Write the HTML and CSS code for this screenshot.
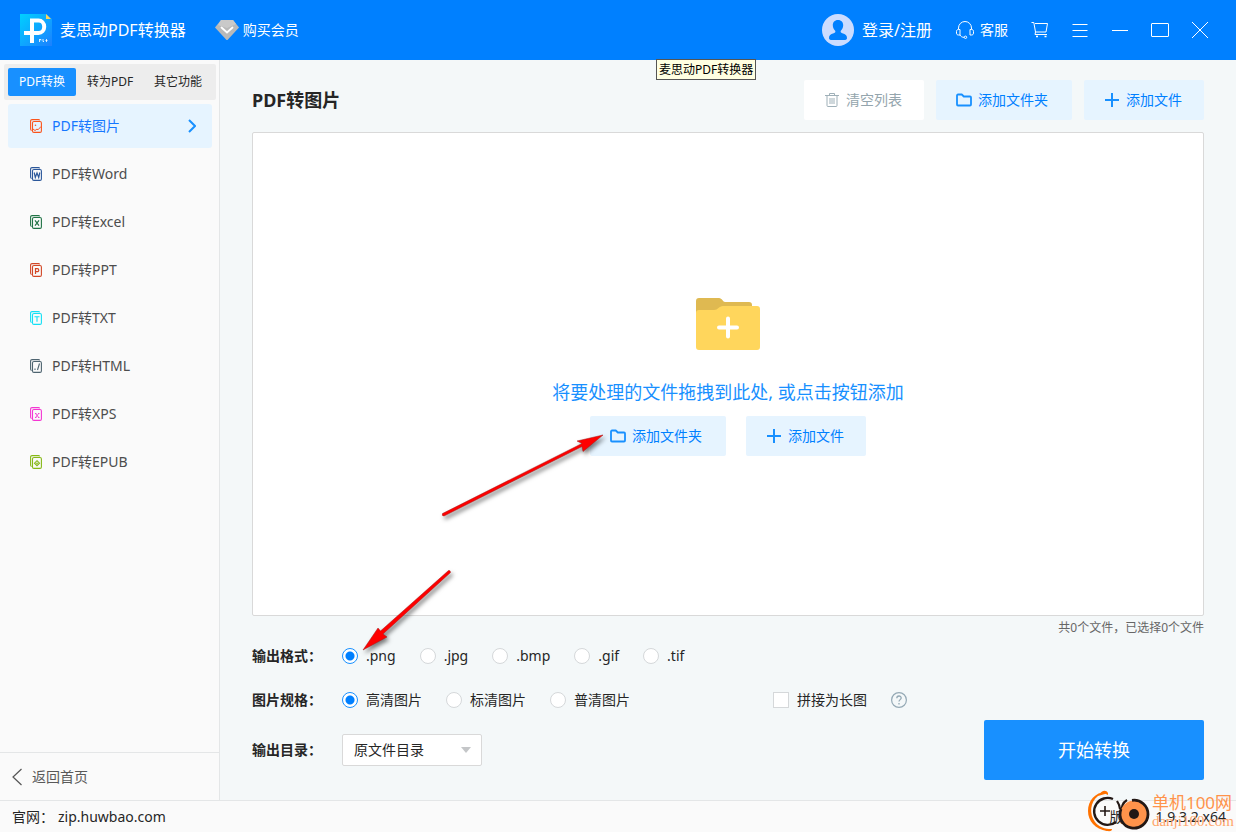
FILE: index.html
```html
<!DOCTYPE html>
<html lang="zh-CN">
<head>
<meta charset="utf-8">
<title>麦思动PDF转换器</title>
<link rel="stylesheet" href="styles.css">
</head>
<body>
<svg class="defs" aria-hidden="true">
  <symbol id="i-folder" viewBox="0 0 16 16"><path d="M1 3.500a1 1 0 0 1 1-1h3.800l2 2H14a1 1 0 0 1 1 1V12.500a1 1 0 0 1-1 1H2a1 1 0 0 1-1-1z" fill="none" stroke="#1890ff" stroke-width="1.800" stroke-linejoin="round"/></symbol>
  <symbol id="i-plus" viewBox="0 0 16 16"><path d="M8 1v14M1 8h14" fill="none" stroke="#1890ff" stroke-width="2"/></symbol>
  <symbol id="i-doc" viewBox="0 0 12 14"><path d="M3.600 2.500h6.400a1.400 1.400 0 0 1 1.400 1.400v8.100a1.400 1.400 0 0 1-1.400 1.400H3.900a1.400 1.400 0 0 1-1.400-1.400V3.900a1.400 1.400 0 0 1 1.400-1.400zM1.600 11.500C.9 11.300.6 10.800.6 10V2A1.400 1.400 0 0 1 2 .6h6.500c.6 0 1 .3 1.200.8" fill="none" stroke="currentColor" stroke-width="1.100"/></symbol>
</svg>

<header class="titlebar">
  <svg class="logo" viewBox="0 0 32 32" width="32" height="32">
    <defs><linearGradient id="lg" x1="0" y1="0" x2="1" y2="1"><stop offset="0" stop-color="#00d0ff"/><stop offset="1" stop-color="#1c80ff"/></linearGradient></defs>
    <path d="M0 0h26l6 5v27H0z" fill="url(#lg)"/><path d="M26 0l5 5h-5z" fill="#ffd35c"/>
    <path d="M12 29V6.500h6.500a5.500 6 0 0 1 0 12.500H4" fill="none" stroke="#fff" stroke-width="4"/>
    <path d="M19.500 25v3M19.500 25.500h1.500v1M23 25v2.500h1M25.500 26.500h2M26.500 25v3" stroke="#fff" stroke-width=".8" fill="none"/>
  </svg>
  <h1 class="app-name">麦思动PDF转换器</h1>
  <button class="vip">
    <svg viewBox="0 0 24 20" width="24" height="20"><path d="M6 0h12l6 7.500L12.500 20h-1L0 7.500z" fill="#b9b9b9"/><path d="M6 0h12l3 4-9 4-9-3z" fill="#c9c9c9"/><path d="M6.500 7.500l5.500 5 5.500-5" fill="none" stroke="#fff" stroke-width="1.800" stroke-linecap="round"/></svg>
    购买会员
  </button>
  <div class="title-actions">
    <button class="login">
      <svg viewBox="0 0 32 32" width="32" height="32"><circle cx="16" cy="16" r="16" fill="#ccdcff"/><path d="M16 6c3.400 0 5.200 2.300 5.200 5.300 0 2.500-1.200 4.200-2.400 5.500-.5 1.400 0 2 1.500 2.500 3.300 1 4.700 2.200 4.700 4.700 0 1.400-1 2-3 2H10c-2 0-3-.6-3-2 0-2.500 1.400-3.700 4.700-4.700 1.500-.5 2-1.100 1.500-2.500-1.200-1.300-2.400-3-2.400-5.500C10.800 8.300 12.600 6 16 6z" fill="#0080ff"/></svg>
      登录/注册
    </button>
    <button class="service">
      <svg viewBox="0 0 18 18" width="18" height="18" fill="none" stroke="#fff" stroke-width="1"><path d="M2.500 8V7a6.500 6.500 0 0 1 13 0v1M4 8.500v5.500H2.500c-1.300 0-2-.7-2-2v-1.500c0-1.300.7-2 2-2zM14 8.500v5.500h1.500c1.300 0 2-.7 2-2v-1.500c0-1.300-.7-2-2-2zM4 14c.8 1.500 2 2.300 4 2.300"/><circle cx="9.500" cy="16.300" r="1.200"/></svg>
      客服
    </button>
    <button class="icon-btn" aria-label="购物车"><svg viewBox="0 0 18 18" width="18" height="18" fill="none" stroke="#fff"><path d="M.5 1.500h2.300l1.700 9.500h10.500l1.500-8.500H4M4.500 11l-.5 2.500h12"/><path d="M5 15.500h2M13.500 15.500h2" stroke-width="1.600"/></svg></button>
    <button class="icon-btn" aria-label="菜单"><svg viewBox="0 0 18 18" width="18" height="18" stroke="#fff"><path d="M1.500 3.500h15M1.500 9.500h15M1.500 15.500h15"/></svg></button>
    <button class="icon-btn" aria-label="最小化"><svg viewBox="0 0 18 18" width="18" height="18" stroke="#fff"><path d="M1 9.500h16"/></svg></button>
    <button class="icon-btn" aria-label="最大化"><svg viewBox="0 0 18 18" width="18" height="18" stroke="#fff" fill="none"><rect x=".5" y="2.500" width="17" height="13" rx=".5"/></svg></button>
    <button class="icon-btn" aria-label="关闭"><svg viewBox="0 0 18 18" width="18" height="18" stroke="#fff"><path d="M1 1l16 16M17 1L1 17"/></svg></button>
  </div>
</header>

<div class="body">
  <aside class="sidebar">
    <div class="tabs" role="tablist">
      <button class="tab active" role="tab" aria-selected="true">PDF转换</button>
      <button class="tab" role="tab">转为PDF</button>
      <button class="tab" role="tab">其它功能</button>
    </div>
    <nav class="nav">
      <a class="nav-item active" href="#"><svg class="doc c-img" viewBox="0 0 12 14"><use href="#i-doc"/><path d="M3 10l2 1.500L7 10l1 .8L11 7.500" fill="none" stroke="currentColor"/><circle cx="5.500" cy="6.300" r=".8" fill="currentColor"/></svg>PDF转图片<svg class="chev" viewBox="0 0 8 14" width="8" height="14"><path d="M1 1l6 6-6 6" fill="none" stroke="#1890ff" stroke-width="2"/></svg></a>
      <a class="nav-item" href="#"><svg class="doc c-word" viewBox="0 0 12 14"><use href="#i-doc"/><path d="M4.200 5.500l1.100 5L7 6l1.700 4.500 1.100-5" fill="none" stroke="currentColor" stroke-width="1.200"/></svg>PDF转Word</a>
      <a class="nav-item" href="#"><svg class="doc c-excel" viewBox="0 0 12 14"><use href="#i-doc"/><path d="M5 5.300l4 5.400M9 5.300l-4 5.400" fill="none" stroke="currentColor" stroke-width="1.200"/></svg>PDF转Excel</a>
      <a class="nav-item" href="#"><svg class="doc c-ppt" viewBox="0 0 12 14"><use href="#i-doc"/><path d="M5.500 11V5.700h1.800a1.500 1.500 0 0 1 0 3H5.500" fill="none" stroke="currentColor" stroke-width="1.200"/></svg>PDF转PPT</a>
      <a class="nav-item" href="#"><svg class="doc c-txt" viewBox="0 0 12 14"><use href="#i-doc"/><path d="M4.500 5.800h5M7 5.800v5" fill="none" stroke="currentColor" stroke-width="1.100"/></svg>PDF转TXT</a>
      <a class="nav-item" href="#"><svg class="doc c-html" viewBox="0 0 12 14"><use href="#i-doc"/><path d="M9.500 4.500l-2 6.500M5 9.500V11" fill="none" stroke="currentColor" stroke-width="1.100"/></svg>PDF转HTML</a>
      <a class="nav-item" href="#"><svg class="doc c-xps" viewBox="0 0 12 14"><use href="#i-doc"/><path d="M5.500 6.500l3.200 4M8.700 6.500l-3.200 4M5 6.500h1.500M8 6.500h1.400M5 10.500h1.500M8 10.500h1.400" fill="none" stroke="currentColor" stroke-width=".9"/></svg>PDF转XPS</a>
      <a class="nav-item" href="#"><svg class="doc c-epub" viewBox="0 0 12 14"><use href="#i-doc"/><path d="M7 5.700L9.500 8.200 7 10.700 4.500 8.200zM6 8.200h2" fill="none" stroke="currentColor" stroke-width="1.100"/></svg>PDF转EPUB</a>
    </nav>
    <a class="back" href="#"><svg viewBox="0 0 10 18" width="10" height="18"><path d="M9.500 1L1 9l8.500 8" fill="none" stroke="#555" stroke-width="1.200"/></svg>返回首页</a>
  </aside>

  <main class="main">
    <div class="toolbar">
      <h2 class="page-title">PDF转图片</h2>
      <button class="btn clear"><svg viewBox="0 0 16 16" width="16" height="16" fill="none" stroke="#9fb0b8"><path d="M1 3.500h14M5.500 3V1.500h5V3M3 4v9.500a1 1 0 0 0 1 1h8a1 1 0 0 0 1-1V4M6 6v6M8 6v6M10 6v6"/></svg>清空列表</button>
      <button class="btn wide"><svg viewBox="0 0 16 16" width="16" height="16"><use href="#i-folder"/></svg>添加文件夹</button>
      <button class="btn"><svg viewBox="0 0 16 16" width="16" height="16"><use href="#i-plus"/></svg>添加文件</button>
    </div>

    <section class="dropzone">
      <svg viewBox="0 0 64 64" width="64" height="64"><path d="M0 24V9a3 3 0 0 1 3-3h20c3 0 4 4 6 4h24a3 3 0 0 1 3 3v8z" fill="#dfb951"/><path d="M3 18h15c4 0 5-4 9-4h34a3 3 0 0 1 3 3v38a3 3 0 0 1-3 3H3a3 3 0 0 1-3-3V21a3 3 0 0 1 3-3z" fill="#ffd65c"/><path d="M32 26.500v18M23 35.500h18" stroke="#fff" stroke-width="4" stroke-linecap="round"/></svg>
      <p class="hint">将要处理的文件拖拽到此处, 或点击按钮添加</p>
      <div class="drop-actions">
        <button class="btn wide"><svg viewBox="0 0 16 16" width="16" height="16"><use href="#i-folder"/></svg>添加文件夹</button>
        <button class="btn"><svg viewBox="0 0 16 16" width="16" height="16"><use href="#i-plus"/></svg>添加文件</button>
      </div>
    </section>

    <p class="count">共0个文件，已选择0个文件</p>

    <div class="settings">
      <form class="options">
        <div class="row" role="radiogroup" aria-labelledby="l-fmt">
          <span class="row-label" id="l-fmt">输出格式：</span>
          <label class="choice"><input type="radio" name="fmt" checked>.png</label>
          <label class="choice"><input type="radio" name="fmt">.jpg</label>
          <label class="choice"><input type="radio" name="fmt">.bmp</label>
          <label class="choice"><input type="radio" name="fmt">.gif</label>
          <label class="choice"><input type="radio" name="fmt">.tif</label>
        </div>
        <div class="row" role="radiogroup" aria-labelledby="l-spec">
          <span class="row-label" id="l-spec">图片规格：</span>
          <label class="choice"><input type="radio" name="spec" checked>高清图片</label>
          <label class="choice"><input type="radio" name="spec">标清图片</label>
          <label class="choice"><input type="radio" name="spec">普清图片</label>
          <label class="choice merge"><input type="checkbox">拼接为长图</label>
          <svg viewBox="0 0 16 16" width="16" height="16" fill="none" stroke="#94a9b5"><circle cx="8" cy="8" r="7.400" stroke-width="1.200"/><path d="M5.800 6.300c0-3 4.400-3 4.400-.3 0 1.500-2.200 1.800-2.200 3.500M8 11v1.500" stroke-width="1.300"/></svg>
        </div>
        <div class="row dir">
          <label class="row-label" for="dir">输出目录：</label>
          <span class="select-wrap">
            <select id="dir"><option>原文件目录</option></select>
            <svg viewBox="0 0 10 6" width="10" height="6"><path d="M0 0h10L5 6z" fill="#c4c6c8"/></svg>
          </span>
        </div>
      </form>
      <button class="start">开始转换</button>
    </div>
  </main>
</div>

<footer class="footer">
  <span>官网：</span><a href="#">zip.huwbao.com</a>
  <span class="ver">版本：</span><span>1.9.3.2.x64</span>
</footer>

<div class="tooltip" role="tooltip">麦思动PDF转换器</div>

<svg class="arrows" viewBox="0 0 260 240" width="260" height="240" aria-hidden="true">
  <g fill="#fe0000" stroke="#a01818" stroke-width=".5" stroke-linejoin="round">
    <path d="M82.500 93.500L222 23.500 217 21 243 15 223 31.500 222 26.500 84 96Q81.500 96 82.500 93.500z"/>
    <path d="M88.500 150.500L20.500 211 18 208 3 230 27 217 23 214 90.500 152.500Q90.500 150 88.500 150.500z"/>
  </g>
</svg>

<div class="watermark" aria-hidden="true">
  <svg viewBox="0 0 64 42" width="64" height="42" fill="none">
    <path d="M19 2C8 2 1 11 1 21c0 10 7 18 19 20l5-2c-3 0-12 0-17-7C2 24 3 12 11 6l7-2 2-2z" fill="#ff7200"/>
    <path d="M13 4c1-3 6-5 8-1v2c-3-2-5-1-8-1zM17 39h8c0 3-5 3-8 0z" fill="#ff7200"/>
    <path d="M26 9A13.500 13.500 0 1 0 29 32" stroke="#231815" stroke-width="2.400"/>
    <path d="M18 16v10M13 21h10" stroke="#231815" stroke-width="1.600"/>
    <path d="M30 11c2 3 3 5 3 8M40 10c-5 3-6 8-5 14" stroke="#231815" stroke-width="2.200"/>
    <circle cx="47" cy="24" r="13.500" fill="#ff934b"/>
    <path d="M45 10.300A14 14 0 1 1 34 19" stroke="#231815" stroke-width="2.800"/>
    <circle cx="47" cy="24" r="5" fill="#231815"/>
  </svg>
  <div class="wm-text"><span class="wm-name">单机100网</span><span class="wm-url">danji100.com</span></div>
</div>
</body>
</html>
```

FILE: styles.css
```css
* { box-sizing: border-box; }

body {
  margin: 0;
  min-height: 100vh;
  display: flex;
  flex-direction: column;
  position: relative;
  overflow-x: hidden;
  background: #f4f8f9;
  color: #262626;
  font: 14px/20px "Noto Sans", "Noto Sans CJK SC", sans-serif;
}

h1, h2, p { margin: 0; }
a { color: inherit; text-decoration: none; }
button { border: 0; padding: 0; margin: 0; background: none; color: inherit; font: inherit; cursor: pointer; }
svg { display: block; flex: none; }
.defs { position: absolute; width: 0; height: 0; }

/* title bar */
.titlebar {
  display: flex;
  align-items: center;
  height: 60px;
  padding: 0 16px 0 20px;
  background: #0080ff;
  color: #fff;
}
.app-name { margin-left: 8px; font-size: 16px; font-weight: 400; line-height: 24px; }
.vip { display: flex; align-items: center; gap: 4px; margin-left: 29px; }
.title-actions { display: flex; align-items: center; margin-left: auto; }
.login { display: flex; align-items: center; gap: 8px; font-size: 16px; }
.service { display: flex; align-items: center; gap: 6px; margin: 0 12px 0 24px; }
.icon-btn { display: flex; justify-content: center; align-items: center; width: 40px; height: 40px; }

/* layout */
.body { flex: 1; display: flex; }

.sidebar {
  display: flex;
  flex-direction: column;
  width: 220px;
  background: #fafafa;
  border-right: 1px solid #e4e6e7;
}
.tabs {
  display: grid;
  grid-template-columns: repeat(3, 1fr);
  margin: 4px 3px 4px 4px;
  padding: 4px;
  background: #ededed;
  border-radius: 2px;
}
.tab { height: 28px; font-size: 12px; border-radius: 2px; }
.tab.active { background: #1890ff; color: #fff; }

.nav { display: flex; flex-direction: column; gap: 4px; padding: 0 7px 0 8px; }
.nav-item {
  display: flex;
  align-items: center;
  gap: 10px;
  height: 44px;
  padding: 0 16px 0 22px;
  border-radius: 3px;
  color: #4d4d4d;
}
.nav-item.active { background: #e6f4ff; color: #1677ff; }
.chev { margin-left: auto; }
.doc { width: 12px; height: 14px; }
.c-img { color: #fa541c; }
.c-word { color: #2b579a; }
.c-excel { color: #217346; }
.c-ppt { color: #d24726; }
.c-txt { color: #13e0f5; }
.c-html { color: #4e6470; }
.c-xps { color: #f436d2; }
.c-epub { color: #86b817; }

.back {
  display: flex;
  align-items: center;
  gap: 10px;
  height: 48px;
  margin-top: auto;
  padding-left: 12px;
  border-top: 1px solid #e4e6e7;
  color: #595959;
}

.main { flex: 1; display: flex; flex-direction: column; min-width: 0; padding: 20px 32px; }

.toolbar { display: flex; align-items: center; gap: 12px; margin-bottom: 12px; }
.page-title { margin-right: auto; font-size: 18px; line-height: 24px; font-weight: 700; }
.btn {
  display: flex;
  align-items: center;
  gap: 6px;
  width: 120px;
  height: 40px;
  padding-left: 20px;
  background: #e6f4ff;
  border-radius: 2px;
  color: #0080ff;
}
.btn.wide { width: 136px; }
.btn.clear { background: #fff; color: #94a5ad; }

.dropzone {
  flex: 1;
  display: flex;
  flex-direction: column;
  align-items: center;
  justify-content: center;
  background: #fff;
  border: 1px solid #d9d9d9;
  border-radius: 2px;
}
.hint { margin: 24px 0 12px; font-size: 18px; line-height: 24px; color: #1890ff; }
.drop-actions { display: flex; gap: 20px; }

.count { font-size: 12px; line-height: 24px; text-align: right; color: #666; }

/* conversion settings */
.settings { display: flex; align-items: flex-end; justify-content: space-between; }
.options { display: flex; flex-direction: column; gap: 12px; padding-bottom: 14px; }
.row { display: flex; align-items: center; gap: 24px; height: 32px; }
.row.dir { margin-top: 6px; }
.row-label { width: 90px; margin-right: -24px; font-weight: 700; }
.choice { display: flex; align-items: center; gap: 8px; }
.choice input {
  appearance: none;
  width: 16px;
  height: 16px;
  margin: 0;
  border: 1px solid #d5d8da;
  background: #fff;
}
.choice input[type="radio"] { border-radius: 50%; }
.choice input[type="radio"]:checked {
  border-color: #1890ff;
  background: radial-gradient(circle, #0080ff 4px, #fff 5px);
}
.merge { margin-left: 119px; }

.select-wrap { display: grid; align-items: center; width: 140px; }
.select-wrap > * { grid-area: 1 / 1; }
.select-wrap select {
  appearance: none;
  width: 100%;
  height: 32px;
  padding: 0 24px 0 11px;
  border: 1px solid #d9d9d9;
  border-radius: 2px;
  background: #fff;
  color: #262626;
  font: inherit;
}
.select-wrap svg { justify-self: end; margin-right: 11px; pointer-events: none; }

.start {
  width: 220px;
  height: 60px;
  background: #1890ff;
  border-radius: 2px;
  color: #fff;
  font-size: 18px;
}

.footer {
  display: flex;
  align-items: center;
  gap: 4px;
  height: 32px;
  padding: 0 10px 0 12px;
  border-top: 1px solid #e4e6e7;
  background: #fafafa;
}
.ver { margin-left: auto; }

/* overlays */
.tooltip {
  position: absolute;
  left: 656px;
  top: 59px;
  padding: 0 2px;
  border: 1px solid #555;
  background: #ffffe1;
  color: #000;
  font-size: 12px;
  line-height: 19px;
}
.arrows {
  position: absolute;
  left: 360px;
  top: 420px;
  pointer-events: none;
  filter: drop-shadow(2px 3px 2px rgba(0, 0, 0, 0.5));
}
.watermark {
  position: absolute;
  right: 2px;
  bottom: 0;
  display: flex;
  align-items: center;
  gap: 1px;
  color: #ff934b;
  pointer-events: none;
}
.wm-text { display: flex; flex-direction: column; }
.wm-name { font-size: 17px; line-height: 20px; }
.wm-url { font-family: "Liberation Serif", serif; font-size: 15px; line-height: 16px; color: #ffa469; }
```
